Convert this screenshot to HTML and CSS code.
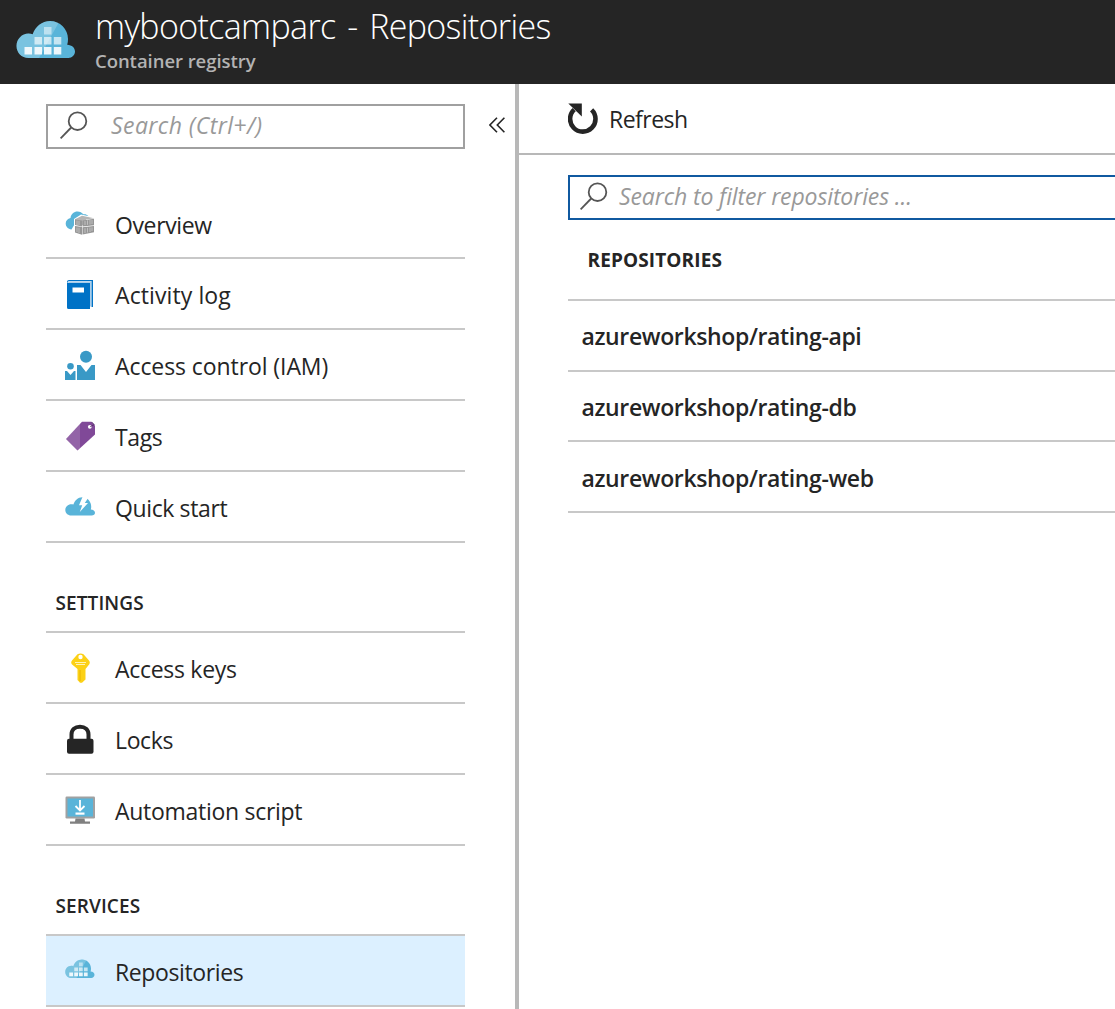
FILE: index.html
```html
<!DOCTYPE html>
<html lang="en">
<head>
<meta charset="utf-8">
<title>mybootcamparc - Repositories</title>
<link rel="stylesheet" href="styles.css">
</head>
<body>
<svg class="defs" width="0" height="0" aria-hidden="true">
  <symbol id="cloud" viewBox="0 0 60 40">
    <path fill="#59b4d9" d="M12.500 38C5.500 38 .5 32.500 .5 26c0-7 5.500-12.500 12-12.500 1.500 0 3 .3 4.200.8C19.200 6.500 26 1 34 1c10 0 18 8 18 18 0 2-.2 4-.8 5.800C56 25 59 28 59 31.500S56 38 52.500 38z"/>
    <path fill="#fff" opacity=".2" d="M12.500 38C5.500 38 .5 32.500 .5 26c0-7 5.500-12.500 12-12.500 1.500 0 3 .3 4.200.8C19.200 6.500 26 1 34 1c3 0 6 .8 8.500 2L23 38z"/>
    <g fill="#fff">
      <path d="M28 7h7.500v7.500H28z" opacity=".5"/>
      <path d="M18.500 17H26v7.500h-7.500zM28 17h7.500v7.500H28zM37.800 17h7.500v7.500h-7.500z" opacity=".65"/>
      <path d="M8.500 27H16v7.500H8.500zM18.500 27H26v7.500h-7.500zM28 27h7.500v7.500H28zM37.800 27h7.500v7.500h-7.500z" opacity=".88"/>
    </g>
  </symbol>
  <symbol id="search" viewBox="0 0 28 28">
    <g fill="none" stroke="#555" stroke-width="1.800"><circle cx="17.500" cy="10.200" r="8.800"/><path d="M11.200 16.500.6 27.400"/></g>
  </symbol>
</svg>

<header class="header">
  <svg class="header-icon"><use href="#cloud"/></svg>
  <div class="header-text">
    <h1 class="title">mybootcamparc - Repositories</h1>
    <p class="subtitle">Container registry</p>
  </div>
</header>

<div class="blade">
  <aside class="sidebar">
    <div class="sidebar-top">
      <div class="search-box">
        <svg class="search-icon"><use href="#search"/></svg>
        <span class="placeholder menu-placeholder">Search (Ctrl+/)</span>
      </div>
      <svg class="collapse" viewBox="0 0 16 16"><path fill="none" stroke="#252525" stroke-width="1.600" d="M8 .8.900 8 8 15.200M15.400.8 8.300 8l7.100 7.200"/></svg>
    </div>

    <nav>
      <ul class="menu">
        <li class="item overview">
          <svg class="icon" viewBox="0 0 30 30">
            <path fill="#59b4d9" d="M6.500 21.500C3 21 .7 18.500 .7 15.500c0-2.800 2-5 4.800-5.500C6 6 9 3.500 12.500 3.500c2.500 0 4.500 1.200 5.800 2.800 3.400-.8 6 1.700 6.500 5.200L13 10.500z"/>
            <path fill="#fff" d="M9 11 16 6.500l14 3V24l-13 4-8-3z"/>
            <path fill="#b5b5b5" d="m10 11.200 7-3.400 12 2.400-8 1.300v6L10 16z"/>
            <path fill="#969696" d="m10 11.400 7 1v6l-7-1.500zm7.500 1L29 10.800v6.500l-11.500 1.200zM10 18l7 1v7.700L10 24.500zm7.500 1.200L29 18v6.300l-11.500 2.300z"/>
            <path stroke="#ddd" stroke-width=".6" d="M12 12.500V17m2-4.300v4.500m6-4.400V17m2.500-4.700v4.500m2.500-4.800v4.500m2-4.700V16M12 19.500V24m2-4.300V25m6-4.800V25m2.500-5.200v4.700m2.500-5v4.600m2-4.800V23"/>
          </svg>
          <span class="label">Overview</span>
        </li>
        <li class="item activity">
          <svg class="icon" viewBox="0 0 30 30">
            <g transform="translate(1 1)">
              <path fill="#a9cdea" d="M3.500 1.200H25V26.500H23V3H2z"/>
              <path fill="#0072c6" d="M1 1.500Q1.200 3 3 3h21v26H2.500Q1 29 1 27.500z"/>
              <path fill="#0072c6" d="M1 2Q1 0 3 0h24v27h-1.500V1H3.500Q2 1 2 2z"/>
              <path fill="#fff" d="M6.500 7.500h11.500v5H6.500z"/>
            </g>
          </svg>
          <span class="label">Activity log</span>
        </li>
        <li class="item access">
          <svg class="icon" viewBox="0 0 30 30">
            <g fill="#3999c6"><circle cx="21" cy="6.800" r="6"/><path d="M12 15h3.500l5.500 7 5.500-7H30V30H12z"/><circle cx="5.500" cy="16.300" r="3.300"/><path d="M0 21h2l3.500 4L9 21h1.500v9H0z"/></g>
          </svg>
          <span class="label">Access control (IAM)</span>
        </li>
        <li class="item">
          <svg class="icon" viewBox="0 0 30 30">
            <path fill="#804998" d="M17 .8h9.500L30 4.500v9L12.500 29.500 1 18z"/>
            <path fill="#fff" opacity=".15" d="M15 2.600V27.200L12.500 29.500 1 18z"/>
            <circle cx="24.800" cy="5.800" r="1.900" fill="#fff"/>
            <path fill="none" stroke="#4f2a66" stroke-width=".8" d="m27 1.200 2.200 2.500-4 2"/>
          </svg>
          <span class="label">Tags</span>
        </li>
        <li class="item">
          <svg class="icon" viewBox="0 0 30 30">
            <path fill="#59b4d9" d="M6.200 23.500C2.800 23.500.3 21 .3 18c0-3.300 2.700-5.800 6-5.800.7 0 1.500.2 2.100.4C9.600 8.500 13 5.200 17.200 5.200c5.200 0 9 4.300 9 9.300 0 1 0 2-.4 3 2.400.2 4.200 1.400 4.200 3.200 0 1.700-1.500 2.800-3.300 2.800z"/>
            <path fill="#fff" d="m17.500 5-3.500 8.300h3.200L14.800 20l8.200-9h-3.200l4-6z"/>
          </svg>
          <span class="label">Quick start</span>
        </li>
      </ul>

      <h2 class="group">SETTINGS</h2>
      <ul class="menu">
        <li class="item keys">
          <svg class="icon" viewBox="0 0 30 30">
            <path fill="#fcd116" fill-rule="evenodd" d="M12.500 1.200C14 .3 17 .3 18.500 1.200L24 7.500c1 1.200 1 2.500.3 3.700L20.500 16v10.500L17 29.800h-2L12.500 27V16L6.800 11.200C6 10 6 8.700 7 7.500zM15.500 1.800a2.200 2.200 0 1 0 0 4.400 2.200 2.200 0 1 0 0-4.400z"/>
            <path stroke="#fff3b5" stroke-width="1" d="M10 9.500h11M11 11.500h9"/>
            <path stroke="#e8b400" stroke-width="1" d="M15 17v11"/>
          </svg>
          <span class="label">Access keys</span>
        </li>
        <li class="item">
          <svg class="icon" viewBox="0 0 30 30">
            <path fill="none" stroke="#252525" stroke-width="4" d="M6.500 16V10.500C6.500 5.500 10 2.700 15 2.700s8.500 2.800 8.500 7.800V16"/>
            <rect x="2" y="14.800" width="26.500" height="15" rx="2" fill="#252525"/>
          </svg>
          <span class="label">Locks</span>
        </li>
        <li class="item keys">
          <svg class="icon" viewBox="0 0 30 30">
            <rect y="1.500" x=".5" width="29.500" height="22" rx="1.200" fill="#a0a1a2"/>
            <path fill="#59b4d9" d="M2.500 3.500h25.500v18H2.500z"/>
            <path fill="#808080" d="M10.500 23.500h9l.5 3h5v2.300H5V26.500h5z"/>
            <path fill="none" stroke="#fff" stroke-width="1.800" d="M15 5v10.500M10.500 11l4.500 4.500 4.500-4.500"/>
            <path fill="#fff" d="M10.500 17.500h9v2.200h-9z"/>
          </svg>
          <span class="label">Automation script</span>
        </li>
      </ul>

      <h2 class="group">SERVICES</h2>
      <ul class="menu">
        <li class="item selected">
          <svg class="icon icon-cloud"><use href="#cloud"/></svg>
          <span class="label">Repositories</span>
        </li>
      </ul>
    </nav>
  </aside>

  <main class="content">
    <div class="toolbar">
      <svg class="refresh" viewBox="0 0 31 32">
        <path fill="none" stroke="#252525" stroke-width="4.600" d="M23.600 6.800A12.700 12.700 0 1 1 6.200 6.600"/>
        <path fill="#252525" d="M.3 .5h13.500v13z"/>
      </svg>
      <span class="refresh-label">Refresh</span>
    </div>
    <div class="list">
      <div class="filter-box">
        <svg class="search-icon"><use href="#search"/></svg>
        <span class="placeholder filter-placeholder">Search to filter repositories ...</span>
      </div>
      <h2 class="list-head">REPOSITORIES</h2>
      <ul class="rows">
        <li class="row">azureworkshop/rating-api</li>
        <li class="row second">azureworkshop/rating-db</li>
        <li class="row third">azureworkshop/rating-web</li>
      </ul>
    </div>
  </main>
</div>
</body>
</html>
```
FILE: styles.css
```css
* { box-sizing: border-box; }

body {
  margin: 0;
  height: 1009px;
  overflow: hidden;
  display: flex;
  flex-direction: column;
  background: #fff;
  color: #252525;
  font-family: "Open Sans", "Noto Sans", sans-serif;
  font-size: 23px;
}

h1, h2, p, ul { margin: 0; padding: 0; font-weight: 400; }
ul { list-style: none; }
svg { flex: none; display: block; }
.defs { position: absolute; }

.header {
  flex: none;
  height: 84px;
  display: flex;
  background: #252525;
}
.header-icon { width: 60px; height: 40px; margin: 20px 0 0 16px; }
.header-text { margin-left: 19px; white-space: nowrap; }
.title {
  font-size: 34px;
  font-weight: 300;
  line-height: 52px;
  letter-spacing: -.65px;
  word-spacing: 3.500px;
  color: #fff;
}
.subtitle {
  font-size: 18.500px;
  font-weight: 600;
  line-height: 18px;
  letter-spacing: -.05px;
  color: #b3b3b3;
}

.blade { flex: 1; display: flex; min-height: 0; }

.sidebar {
  flex: none;
  width: 519px;
  padding: 20px 0 0 46px;
  border-right: 4px solid #b8b8b8;
}
.sidebar-top { display: flex; align-items: center; margin-bottom: 39px; }
.search-box {
  width: 419px;
  height: 45px;
  display: flex;
  border: 2px solid #a0a0a0;
}
.search-icon { width: 28px; height: 28px; margin: 5px 0 0 12px; }
.placeholder {
  font-style: italic;
  line-height: 38px;
  color: #999;
  white-space: nowrap;
}
.menu-placeholder { margin-left: 23px; letter-spacing: .42px; }
.collapse { width: 16px; height: 16px; margin: 0 0 3px 24px; }

nav { width: 419px; }
.item {
  height: 71px;
  display: flex;
  align-items: center;
  padding-left: 19px;
  border-bottom: 2px solid #c8c8c8;
  letter-spacing: -.38px;
}
.activity { letter-spacing: .1px; }
.access { letter-spacing: -.08px; }
.keys { letter-spacing: -.29px; }
.icon { width: 30px; height: 30px; margin-top: 1px; }
.icon-cloud { height: 20px; margin-top: -3px; }
.label { margin-left: 20px; padding-top: 3px; white-space: nowrap; }
.overview .label { padding-top: 5px; }
.selected { background: #dcf0ff; }
.group {
  height: 90px;
  padding: 44px 0 0 9.500px;
  border-bottom: 2px solid #c8c8c8;
  font-size: 19px;
  font-weight: 600;
  line-height: 32px;
  letter-spacing: .1px;
}

.content { flex: 1; min-width: 0; overflow: hidden; }
.toolbar {
  height: 71px;
  display: flex;
  align-items: center;
  padding-left: 49px;
  border-bottom: 2px solid #b8b8b8;
}
.refresh { width: 31px; height: 32px; }
.refresh-label { margin-left: 10px; letter-spacing: -.52px; }
.list { padding: 20px 0 0 49px; }
.filter-box {
  width: 600px;
  height: 45px;
  display: flex;
  border: 2px solid #1059a0;
}
.filter-box .search-icon { margin-left: 10px; }
.filter-placeholder { margin-left: 11px; letter-spacing: -.12px; }
.list-head {
  height: 81px;
  padding: 24px 0 0 19.500px;
  border-bottom: 2px solid #c8c8c8;
  font-size: 19px;
  font-weight: 700;
  line-height: 32px;
  letter-spacing: .12px;
}
.row {
  height: 71px;
  padding-left: 13.500px;
  border-bottom: 2px solid #c8c8c8;
  font-weight: 600;
  line-height: 71px;
  letter-spacing: -.37px;
}
.second { height: 70px; }
.third { padding-top: 1px; }
```
